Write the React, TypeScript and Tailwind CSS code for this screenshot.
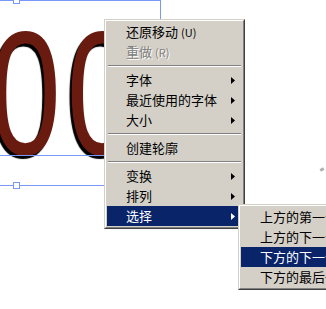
import React from "react";

const font = { fontFamily: '"Noto Sans CJK SC", "Noto Sans", sans-serif' };

type Item =
  | { kind: "item"; label: string; hint?: string; sub?: boolean; disabled?: boolean; active?: boolean }
  | { kind: "sep" };

const mainItems: Item[] = [
  { kind: "item", label: "还原移动", hint: "(U)" },
  { kind: "item", label: "重做", hint: "(R)", disabled: true },
  { kind: "sep" },
  { kind: "item", label: "字体", sub: true },
  { kind: "item", label: "最近使用的字体", sub: true },
  { kind: "item", label: "大小", sub: true },
  { kind: "sep" },
  { kind: "item", label: "创建轮廓" },
  { kind: "sep" },
  { kind: "item", label: "变换", sub: true },
  { kind: "item", label: "排列", sub: true },
  { kind: "item", label: "选择", sub: true, active: true },
];

const subItems: Item[] = [
  { kind: "item", label: "上方的第一个" },
  { kind: "item", label: "上方的下一个" },
  { kind: "item", label: "下方的下一个", active: true },
  { kind: "item", label: "下方的最后一个" },
];

function Arrow({ white }: { white?: boolean }) {
  return (
    <svg width="4" height="7" viewBox="0 0 4 7" className="shrink-0">
      <polygon points="0,0 4,3.5 0,7" fill={white ? "#fff" : "#000"} />
    </svg>
  );
}

function Menu({ items }: { items: Item[] }) {
  return (
    <div className="border border-t-[#d4d0c8] border-l-[#d4d0c8] border-r-[#404040] border-b-[#404040] bg-[#d4d0c8]">
      <div className="border border-t-white border-l-white border-r-[#808080] border-b-[#808080] p-px">
        {items.map((it, i) =>
          it.kind === "sep" ? (
            <div key={i} className="h-[8px] flex flex-col justify-center px-px">
              <div className="h-px bg-[#808080]" />
              <div className="h-px bg-white" />
            </div>
          ) : (
            <div
              key={i}
              className={`h-[20px] flex items-center pl-[19px] pr-[7px] whitespace-nowrap text-[13px] ${
                it.active ? "bg-[#0a246a] text-white" : it.disabled ? "text-[#808080]" : "text-black"
              }`}
            >
              <span className={`flex-1 ${it.disabled ? "[text-shadow:1px_1px_0_#fff]" : ""}`}>
                {it.label}
                {it.hint && <span className="ml-[3px] text-[11px]">{it.hint}</span>}
              </span>
              {it.sub && <Arrow white={it.active} />}
            </div>
          )
        )}
      </div>
    </div>
  );
}

function Handle({ x, y }: { x: number; y: number }) {
  return (
    <div
      className="absolute w-[7px] h-[7px] bg-white border border-[#7a98f8]"
      style={{ left: x - 3, top: y - 3 }}
    />
  );
}

export default function App() {
  return (
    <div className="relative w-[326px] h-[309px] overflow-hidden bg-white" style={font}>
      {/* canvas: text object */}
      <span
        className="absolute left-[-10px] top-[5px] origin-left scale-x-[0.72] text-[177px] leading-none tracking-[8px] text-[#6a1b10] [text-shadow:-3px_3px_1px_#000] whitespace-nowrap"
        style={{ fontFamily: '"Liberation Sans", Arial, sans-serif' }}
      >
        00
      </span>

      {/* selection box */}
      <div className="absolute left-0 top-0 w-[160px] h-px bg-[#7a98f8]" />
      <div className="absolute left-[160px] top-0 w-px h-[186px] bg-[#7a98f8]" />
      <div className="absolute left-0 top-[155px] w-[160px] h-px bg-[#7a98f8]" />
      <div className="absolute left-0 top-[185px] w-[160px] h-px bg-[#7a98f8]" />
      <Handle x={16} y={0} />
      <Handle x={16} y={185} />

      <div className="absolute left-[320px] top-[168px] w-[4px] h-[3px] bg-[#b0b0b0] rotate-[-30deg]" />

      {/* context menu */}
      <div className="absolute left-[104px] top-[19px] w-[141px]">
        <Menu items={mainItems} />
      </div>
      <div className="absolute left-[238px] top-[204px] w-[130px]">
        <Menu items={subItems} />
      </div>
    </div>
  );
}
